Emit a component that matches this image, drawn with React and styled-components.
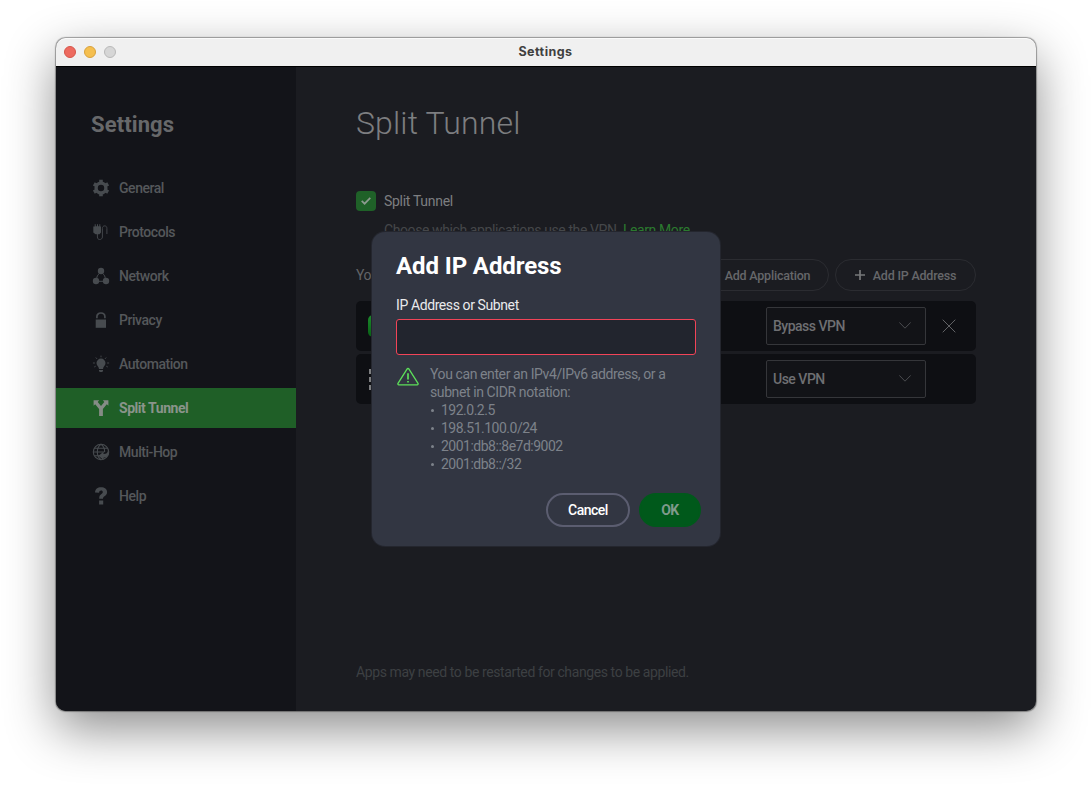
import React from "react";
import styled, { createGlobalStyle, css } from "styled-components";

const GlobalStyle = createGlobalStyle`
  * {
    box-sizing: border-box;
  }
  body {
    margin: 0;
    background-color: #ffffff;
    font-family: Roboto, "Liberation Sans", sans-serif;
    font-size: 14px;
    letter-spacing: -0.4px;
    overflow: hidden;
  }
  svg {
    display: block;
    flex: none;
  }
`;

const Desktop = styled.div`
  height: 785px;
  padding: 38px 56px 74px;
`;

const Window = styled.div`
  position: relative;
  display: flex;
  flex-direction: column;
  width: 980px;
  height: 673px;
  border-radius: 10px;
  background-color: #1b1c21;
  box-shadow: 0 0 1px 0.5px rgba(0, 0, 0, 0.35),
    0 18px 50px rgba(0, 0, 0, 0.45);
`;

const TitleBar = styled.div`
  display: grid;
  grid-template-columns: 1fr auto 1fr;
  align-items: center;
  height: 28px;
  padding: 0 9px 0 8px;
  border-radius: 10px 10px 0 0;
  background-color: #f0f0f0;
  box-shadow: inset 0 1px 0 #fafafa;
`;

const Lights = styled.div`
  display: flex;
  gap: 8px;
`;

const Light = styled.span`
  width: 12px;
  height: 12px;
  border-radius: 50%;
  border: 1px solid ${(props) => props.edge};
  background-color: ${(props) => props.fill};
`;

const WindowTitle = styled.div`
  height: 28px;
  color: #404040;
  font-family: Inter, sans-serif;
  font-size: 12.500px;
  font-weight: 700;
  letter-spacing: 0.450px;
  line-height: 28px;
`;

const Body = styled.div`
  display: flex;
  flex: 1;
  border-top: 1px solid #000000;
  border-radius: 0 0 10px 10px;
  overflow: hidden;
`;

const Sidebar = styled.div`
  width: 240px;
  padding-top: 44px;
  background-color: #131419;
`;

const SidebarTitle = styled.div`
  height: 57px;
  padding-left: 35px;
  color: #67686a;
  font-size: 22px;
  font-weight: 700;
  letter-spacing: 0.1px;
  line-height: 28px;
`;

const Nav = styled.div`
  display: flex;
  flex-direction: column;
  gap: 4px;
`;

const NavItem = styled.div`
  display: flex;
  align-items: center;
  gap: 9px;
  height: 40px;
  padding-left: 36px;
  color: #55585b;
  font-weight: 500;
  letter-spacing: -0.450px;
  ${(props) =>
    props.active &&
    css`
      color: #8a948b;
      background-color: #1f5f27;
      font-weight: 700;
    `}
`;

const NavIcon = styled.svg`
  width: 18px;
  height: 18px;
  color: ${(props) => (props.$active ? "#858c86" : "#474b4f")};
`;

const Label = styled.div`
  line-height: 18px;
`;

const Content = styled.div`
  flex: 1;
  display: flex;
  flex-direction: column;
  padding: 35px 60px 30px;
`;

const PageTitle = styled.div`
  height: 89px;
  color: #7d7e80;
  font-size: 32px;
  font-weight: 300;
  letter-spacing: 0.15px;
  line-height: 42px;
`;

const CheckRow = styled.div`
  display: flex;
  align-items: center;
  gap: 8px;
  height: 20px;
  color: #7d7e80;
  letter-spacing: -0.3px;
`;

const CheckBox = styled.div`
  display: flex;
  align-items: center;
  justify-content: center;
  width: 20px;
  height: 20px;
  border-radius: 4px;
  background-color: #1f6128;
`;

const Description = styled.div`
  margin-top: 10px;
  padding-left: 28px;
  color: #45474a;
  line-height: 18px;
`;

const LearnMore = styled.span`
  color: #2b7a2f;
`;

const RulesHead = styled.div`
  display: flex;
  align-items: center;
  gap: 6px;
  margin: 20px 0 10px;
  color: #636467;
`;

const RulesLabel = styled.div`
  flex: 1;
`;

const PillButton = styled.div`
  display: flex;
  align-items: center;
  justify-content: center;
  gap: 8px;
  width: 141px;
  height: 32px;
  border: 1px solid #2b2c31;
  border-radius: 16px;
  color: #66676a;
  font-size: 12.500px;
  font-weight: 500;
  letter-spacing: -0.2px;
`;

const PillLabel = styled.div`
  padding-top: 2px;
  line-height: 18px;
`;

const Rule = styled.div`
  display: flex;
  align-items: center;
  height: 50px;
  margin-bottom: 3px;
  padding: 0 20px 0 10px;
  border-radius: 5px;
  background-color: #0e0f13;
`;

const AppBadge = styled.div`
  width: 22px;
  height: 22px;
  margin-left: 2px;
  border-radius: 5px;
  background: linear-gradient(#1c8a2c, #086015);
`;

const Dropdown = styled.div`
  display: flex;
  align-items: center;
  justify-content: space-between;
  width: 160px;
  height: 38px;
  margin-left: auto;
  padding: 0 14px 0 6px;
  border: 1px solid #35363a;
  border-radius: 2px;
  background-color: #121317;
  color: #6e6f72;
  font-weight: 500;
  letter-spacing: -0.5px;
`;

const RemoveSlot = styled.div`
  display: flex;
  justify-content: flex-end;
  width: 30px;
`;

const Footnote = styled.div`
  margin-top: auto;
  color: #3d4043;
  line-height: 18px;
`;

const Dialog = styled.div`
  position: absolute;
  top: 194px;
  left: 316px;
  display: flex;
  flex-direction: column;
  width: 348px;
  height: 314px;
  padding: 18px 19px 19px 24px;
  border-radius: 13px;
  background-color: #323642;
  box-shadow: 0 0 0 1px #24262e;
`;

const DialogTitle = styled.div`
  height: 46px;
  color: #ffffff;
  font-size: 24px;
  font-weight: 700;
  letter-spacing: -0.1px;
  line-height: 32px;
`;

const FieldLabel = styled.div`
  height: 23px;
  color: #e9eaec;
  line-height: 19px;
`;

const Field = styled.div`
  width: 300px;
  height: 36px;
  border: 1px solid #f24458;
  border-radius: 3px;
  background-color: #22252e;
`;

const Hint = styled.div`
  display: flex;
  gap: 11px;
  margin-top: 10px;
  color: #7d828a;
  line-height: 18px;
`;

const HintLine = styled.div`
  white-space: nowrap;
`;

const Example = styled.div`
  display: flex;
  align-items: center;
  gap: 7px;
  letter-spacing: -0.5px;
  &::before {
    content: "";
    width: 3px;
    height: 3px;
    margin-left: 1px;
    border-radius: 50%;
    background-color: #7d828a;
  }
`;

const Actions = styled.div`
  display: flex;
  justify-content: flex-end;
  gap: 9px;
  margin-top: auto;
`;

const ActionButton = styled.div`
  display: flex;
  align-items: center;
  justify-content: center;
  width: ${(props) => (props.primary ? "62px" : "84px")};
  height: 34px;
  border-radius: 17px;
  border: 2px solid ${(props) => (props.primary ? "#00591b" : "#5b5d70")};
  background-color: ${(props) => (props.primary ? "#00591b" : "transparent")};
  color: ${(props) => (props.primary ? "#7f9a8c" : "#ffffff")};
  font-weight: ${(props) => (props.primary ? 700 : 500)};
  letter-spacing: -0.5px;
`;

const icons = {
  general: (
    <g fill="none" stroke="currentColor">
      <circle cx="9" cy="9" r="4.900" strokeWidth="3.400" />
      {[0, 60, 120, 180, 240, 300].map((angle) => (
        <path
          key={angle}
          d="M9 .7v3"
          strokeWidth="3.600"
          transform={`rotate(${angle} 9 9)`}
        />
      ))}
    </g>
  ),
  protocols: (
    <>
      <path
        fill="currentColor"
        d="M2.700 1.200h1v2h1.300v-2h1v2h1.300v-2h1v2.300H9v6l-1.500 1.800h-4L1.300 9.500V3.500h1.400z"
      />
      <path
        d="M5.400 11v3c0 1.600.9 2.500 2.300 2.500s2.700-.9 2.700-2.500V5.500c0-1.600.8-2.600 2.300-2.600s2.200 1 2.200 2.600V11"
        fill="none"
        stroke="currentColor"
        strokeWidth="0.9"
      />
    </>
  ),
  network: (
    <>
      <circle cx="9" cy="4" r="3.200" fill="currentColor" />
      <circle cx="4" cy="14" r="3.200" fill="currentColor" />
      <circle cx="14" cy="14" r="3.200" fill="currentColor" />
      <path
        d="M7.500 6.500C5.500 8 4.800 9.500 4.800 11.500M10.500 6.500c2 1.500 2.700 3 2.700 5M7 14.300h4"
        fill="none"
        stroke="currentColor"
      />
    </>
  ),
  privacy: (
    <>
      <path fill="currentColor" d="M3.700 8.500h10.300v8.300H3.700z" />
      <path
        d="M4.900 7.300V5.800C4.900 3.500 6.500 2 8.900 2s4 1.500 4 3.800v1.500"
        fill="none"
        stroke="currentColor"
        strokeWidth="1.700"
      />
    </>
  ),
  automation: (
    <>
      <path
        fill="currentColor"
        d="M9 3.600a4.500 4.500 0 0 0-4.500 4.500c0 2.600 2.300 3.500 2.500 6h4c.2-2.500 2.500-3.400 2.500-6A4.500 4.500 0 0 0 9 3.600zM7 15h4v1.200l-1 .9H8l-1-.9z"
      />
      <path
        d="M9 .6v1.700M3.800 2.500 5 3.900M14.200 2.500 13 3.900M.9 8h2M15.100 8h2M2.200 12l1.500-.8M15.800 12l-1.500-.8"
        stroke="currentColor"
        strokeWidth="0.9"
      />
    </>
  ),
  split: (
    <path
      fill="currentColor"
      d="M1.600 1.200h5.600L5.700 2.900 9 7l3.300-4.100-1.500-1.700h5.600v5.600l-1.600-1.600-3.900 4.800v7H7.100v-7L3.200 5.200 1.600 6.800z"
    />
  ),
  multihop: (
    <>
      <g fill="none" stroke="currentColor" strokeWidth="1.100">
        <circle cx="9" cy="9" r="7.700" />
        <path d="M9 16.700C6 14.500 5.300 12 5.300 9S6.500 3 9 1.300C11.500 3 12.700 5 12.700 9M1.300 9h11M2.300 5.200h13.400M2.300 12.800H9" />
      </g>
      <path
        fill="currentColor"
        d="m6.500 12.800 5-4v2.300c2.600.1 4-.9 4.400-3.300 2.300 4.100-.5 6.900-4.400 7v2.300z"
      />
    </>
  ),
  help: (
    <path
      fill="currentColor"
      d="M3 5.500C3.200 2 5.500.2 9.100.2c3.500 0 6 1.700 6 4.700 0 2.100-1.100 3.200-2.600 4.300-1.200.9-1.500 1.300-1.500 2.600H7.200c0-2.700.5-3.500 2.200-4.800 1-.7 1.400-1.200 1.400-1.900 0-.9-.7-1.500-1.700-1.500-1.200 0-1.900.8-2 2.100zM7.100 13.500h4.100v4H7.100z"
    />
  ),
};

const navItems = [
  { icon: "general", label: "General" },
  { icon: "protocols", label: "Protocols" },
  { icon: "network", label: "Network" },
  { icon: "privacy", label: "Privacy" },
  { icon: "automation", label: "Automation" },
  { icon: "split", label: "Split Tunnel", active: true },
  { icon: "multihop", label: "Multi-Hop" },
  { icon: "help", label: "Help" },
];

const examples = [
  "192.0.2.5",
  "198.51.100.0/24",
  "2001:db8::8e7d:9002",
  "2001:db8::/32",
];

const Plus = () => (
  <svg width="10" height="10" viewBox="0 0 10 10">
    <path d="M5 0v10M0 5h10" stroke="#77787a" strokeWidth="1.700" />
  </svg>
);

const Chevron = () => (
  <svg width="12" height="9" viewBox="0 0 12 9">
    <path
      d="m.3.4 5.700 5.800L11.700.4"
      fill="none"
      stroke="#5b5c60"
      strokeWidth="0.8"
    />
  </svg>
);

const Cross = () => (
  <svg width="14" height="14" viewBox="0 0 14 14">
    <path d="m.7.7 12.600 12.600m0-12.600L.7 13.300" stroke="#626366" />
  </svg>
);

const Grid = () => (
  <svg width="24" height="22" viewBox="0 0 24 22">
    {[1, 9, 17].map((y) =>
      [3, 11, 19].map((x) => (
        <rect key={`${x}-${y}`} x={x} y={y} width="5" height="5" fill="#7d7e80" />
      ))
    )}
  </svg>
);

const Warning = () => (
  <svg width="23" height="23" viewBox="0 0 23 23">
    <path
      d="M11 4.100 2 18.300c-.4.700 0 1.500.8 1.500h18.400c.8 0 1.200-.8.8-1.500L13 4.100c-.5-.8-1.500-.8-2 0z"
      fill="none"
      stroke="#5ddf5a"
      strokeWidth="1.300"
    />
    <path d="M12 8.300v6.200M12 15.900v1.700" stroke="#5ddf5a" strokeWidth="1.700" />
  </svg>
);

export default () => {
  return (
    <>
      <GlobalStyle />
      <Desktop>
        <Window>
          <TitleBar>
            <Lights>
              <Light fill="#ed6a5f" edge="#d65549" />
              <Light fill="#f5bf4f" edge="#d9a23c" />
              <Light fill="#d6d6d6" edge="#b9b9b9" />
            </Lights>
            <WindowTitle>Settings</WindowTitle>
          </TitleBar>
          <Body>
            <Sidebar>
              <SidebarTitle>Settings</SidebarTitle>
              <Nav>
                {navItems.map((item) => (
                  <NavItem key={item.label} active={item.active}>
                    <NavIcon viewBox="0 0 18 18" $active={item.active}>
                      {icons[item.icon]}
                    </NavIcon>
                    <Label>{item.label}</Label>
                  </NavItem>
                ))}
              </Nav>
            </Sidebar>
            <Content>
              <PageTitle>Split Tunnel</PageTitle>
              <CheckRow>
                <CheckBox>
                  <svg width="10" height="8" viewBox="0 0 10 8">
                    <path
                      d="m.7 3.900 2.900 2.800L9.300.9"
                      fill="none"
                      stroke="#8d9a8f"
                      strokeWidth="1.700"
                    />
                  </svg>
                </CheckBox>
                <Label>Split Tunnel</Label>
              </CheckRow>
              <Description>
                Choose which applications use the VPN.{" "}
                <LearnMore>Learn More</LearnMore>
              </Description>
              <RulesHead>
                <RulesLabel>Your</RulesLabel>
                <PillButton>
                  <Plus />
                  <PillLabel>Add Application</PillLabel>
                </PillButton>
                <PillButton>
                  <Plus />
                  <PillLabel>Add IP Address</PillLabel>
                </PillButton>
              </RulesHead>
              <Rule>
                <AppBadge />
                <Dropdown>
                  <Label>Bypass VPN</Label>
                  <Chevron />
                </Dropdown>
                <RemoveSlot>
                  <Cross />
                </RemoveSlot>
              </Rule>
              <Rule>
                <Grid />
                <Dropdown>
                  <Label>Use VPN</Label>
                  <Chevron />
                </Dropdown>
                <RemoveSlot />
              </Rule>
              <Footnote>
                Apps may need to be restarted for changes to be applied.
              </Footnote>
            </Content>
          </Body>
          <Dialog>
            <DialogTitle>Add IP Address</DialogTitle>
            <FieldLabel>IP Address or Subnet</FieldLabel>
            <Field />
            <Hint>
              <Warning />
              <div>
                <HintLine>You can enter an IPv4/IPv6 address, or a</HintLine>
                <HintLine>subnet in CIDR notation:</HintLine>
                {examples.map((example) => (
                  <Example key={example}>{example}</Example>
                ))}
              </div>
            </Hint>
            <Actions>
              <ActionButton>
                <Label>Cancel</Label>
              </ActionButton>
              <ActionButton primary>
                <Label>OK</Label>
              </ActionButton>
            </Actions>
          </Dialog>
        </Window>
      </Desktop>
    </>
  );
};
